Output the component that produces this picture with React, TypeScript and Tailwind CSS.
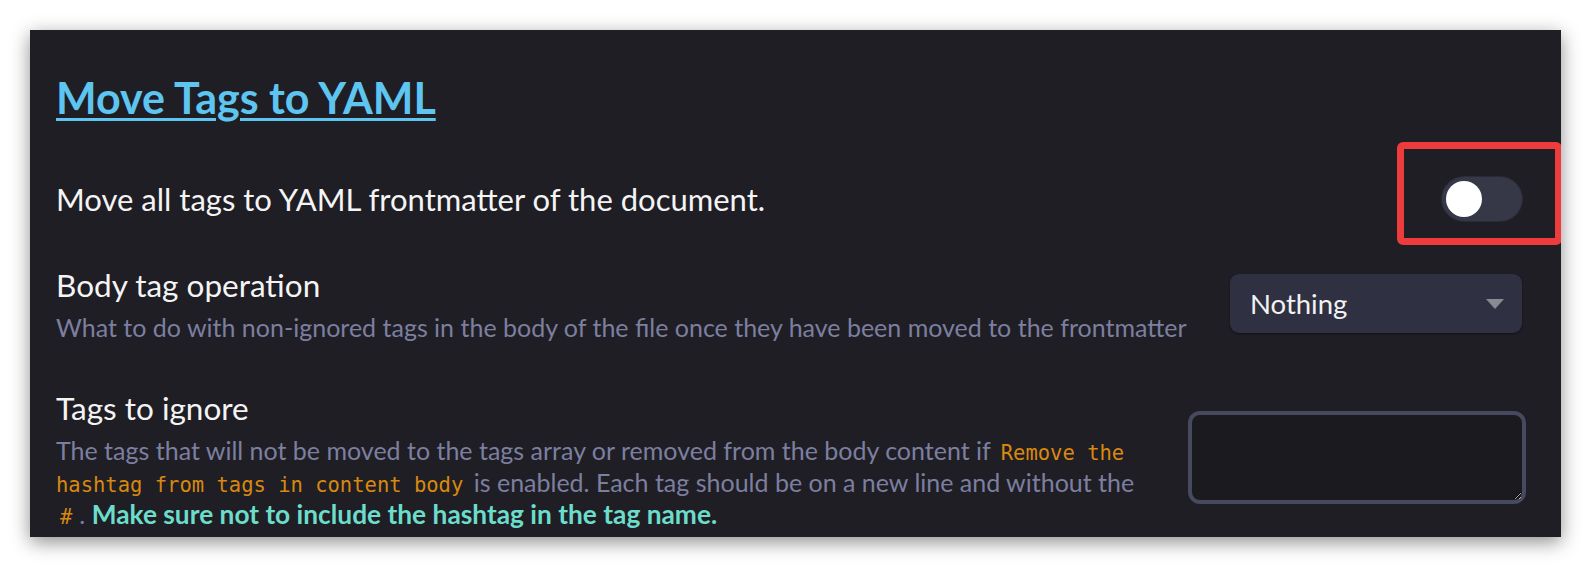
import React from 'react';

const codeCls = "font-['DejaVu_Sans_Mono',monospace] text-[20.5px] leading-none text-[#d9890f] px-[4px]";

function Toggle() {
  return (
    <div className="relative w-[80px] h-[44px] rounded-full bg-[#363848] ring-1 ring-[#2a2b38]">
      <div className="absolute left-[4px] top-[4px] w-[36px] h-[36px] rounded-full bg-white" />
    </div>
  );
}

function Dropdown() {
  return (
    <div className="flex items-center justify-between w-[292px] h-[59px] mt-[8px] rounded-[9px] bg-[#2f3041] pl-[20px] pr-[18px] shadow-[0_1px_2px_rgba(0,0,0,0.5)]">
      <span className="text-[27.5px] text-[#f2f2f2]">Nothing</span>
      <svg width="18" height="10" viewBox="0 0 18 10">
        <path d="M0 0 H18 L9 10 Z" fill="#8a8a92" />
      </svg>
    </div>
  );
}

export default function App() {
  return (
    <div className="w-[1591px] h-[567px] bg-white pt-[30px] pl-[30px] font-['Lato',sans-serif]">
      <div className="relative w-[1531px] h-[507px] bg-[#1f1e24] shadow-[0_5px_18px_rgba(0,0,0,0.45)] pl-[26px] pr-[39px] pt-[40px] overflow-hidden">
        <h2 className="text-[43px] leading-[56px] font-bold text-[#5ec4f0] underline decoration-[3px] underline-offset-[4px]">
          Move Tags to YAML
        </h2>

        <div className="relative flex items-center justify-between mt-[45px] h-[56px]">
          <p className="text-[31px] text-[#f4f4f4]">Move all tags to YAML frontmatter of the document.</p>
          <Toggle />
          <div className="absolute right-[-40px] top-[-29px] w-[165px] h-[103px] border-[7px] border-[#ee3b3b] rounded-[6px]" />
        </div>

        <div className="flex items-start gap-[24px] mt-[39px]">
          <div className="flex-1">
            <div className="text-[31.5px] leading-[38px] text-[#f4f4f4]">Body tag operation</div>
            <div className="mt-[7px] text-[25px] leading-[32px] text-[#7c7fa0]">
              What to do with non-ignored tags in the body of the file once they have been moved to the frontmatter
            </div>
          </div>
          <Dropdown />
        </div>

        <div className="flex items-start gap-[24px] mt-[46px]">
          <div className="flex-1">
            <div className="text-[31.5px] leading-[38px] text-[#f4f4f4]">Tags to ignore</div>
            <div className="mt-[7px] text-[25px] leading-[32px] text-[#7c7fa0]">
              The tags that will not be moved to the tags array or removed from the body content if{' '}
              <code className={codeCls}>Remove the hashtag from tags in content body</code>{' '}
              is enabled. Each tag should be on a new line and without the{' '}
              <code className={`${codeCls} mr-[3px]`}>#</code>.{' '}
              <span className="text-[26.3px] font-bold text-[#6cdccb]">Make sure not to include the hashtag in the tag name.</span>
            </div>
          </div>
          <textarea className="w-[338px] h-[93px] mt-[22px] mr-[-4px] border-[4px] border-[#474a5e] rounded-[12px] bg-[#1b1a1f] resize [color-scheme:dark] outline-none" />
        </div>
      </div>
    </div>
  );
}
